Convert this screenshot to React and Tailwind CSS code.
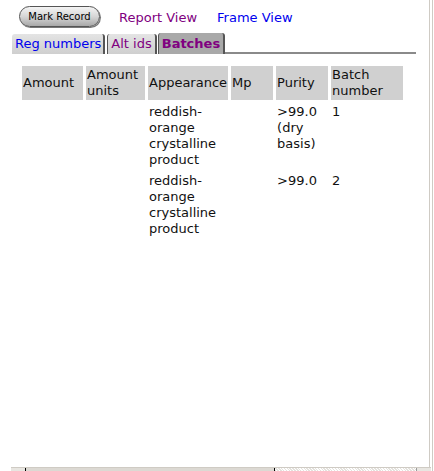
import React from 'react';

const rows = [
  { appearance: ['reddish-', 'orange', 'crystalline', 'product'], purity: ['>99.0', '(dry', 'basis)'], batch: '1' },
  { appearance: ['reddish-', 'orange', 'crystalline', 'product'], purity: ['>99.0'], batch: '2' },
];

const App = () => {
  return (
    <div className="relative h-[471px] w-[434px] overflow-hidden bg-white text-[13px] leading-[16px] text-[#111]" style={{ fontFamily: '"DejaVu Sans", Verdana, sans-serif' }}>
      {/* top links */}
      <div className="flex items-center pl-[19px] pt-[6px]">
        <button className="h-[21px] w-[81px] rounded-full border border-[#555] bg-gradient-to-b from-[#f4f4f4] via-[#d6d6d6] to-[#a8a8a8] text-[10px] leading-[19px] text-black shadow-[1px_1px_0_#777]">
          Mark Record
        </button>
        <span className="ml-[19px] mt-[3px] text-[#800080]">Report View</span>
        <span className="ml-[20px] mt-[3px] text-[#0000ee]">Frame View</span>
      </div>

      {/* tabs */}
      <div className="mt-[6px] flex items-end pl-[12px]">
        <div className="flex h-[20px] items-center rounded-t-[3px] border-r-2 border-[#555] bg-gradient-to-b from-[#e4e4e4] to-[#cfcfcf] pl-[3px] pr-[2px] text-[#0000ee]">
          Reg numbers
        </div>
        <div className="ml-[2px] flex h-[20px] items-center rounded-t-[3px] border-l border-r-2 border-[#555] bg-gradient-to-b from-[#e4e4e4] to-[#cfcfcf] px-[3px] text-[#800080]">
          Alt ids
        </div>
        <div className="ml-[1px] flex h-[21px] items-center rounded-t-[3px] border-l border-r-2 border-[#555] bg-[#a9a9a9] px-[3px] font-bold text-[#800080]">
          Batches
        </div>
        <div className="h-[2px] w-[191px] bg-[#8a8a8a]"></div>
      </div>

      {/* table */}
      <table className="ml-[19px] mt-[9px] border-separate border-spacing-[3px]">
        <thead>
          <tr className="text-left font-normal">
            <th className="w-[61px] bg-[#d0d0d0] px-[1px] py-[1px] align-middle font-normal">Amount</th>
            <th className="w-[59px] bg-[#d0d0d0] px-[1px] py-[1px] align-middle font-normal">Amount<br />units</th>
            <th className="w-[79px] bg-[#d0d0d0] px-[1px] py-[1px] align-middle font-normal">Appearance</th>
            <th className="w-[42px] bg-[#d0d0d0] px-[1px] py-[1px] align-middle font-normal">Mp</th>
            <th className="w-[52px] bg-[#d0d0d0] px-[1px] py-[1px] align-middle font-normal">Purity</th>
            <th className="w-[72px] bg-[#d0d0d0] px-[1px] py-[1px] align-middle font-normal">Batch<br />number</th>
          </tr>
        </thead>
        <tbody>
          {rows.map((r, i) => (
            <tr key={i} className="align-top">
              <td className="px-[1px] py-[1px]"></td>
              <td className="px-[1px] py-[1px]"></td>
              <td className="px-[1px] py-[1px]">
                {r.appearance.map((l, j) => <div key={j}>{l}</div>)}
              </td>
              <td className="px-[1px] py-[1px]"></td>
              <td className="px-[1px] py-[1px]">
                {r.purity.map((l, j) => <div key={j}>{l}</div>)}
              </td>
              <td className="px-[1px] py-[1px]">{r.batch}</td>
            </tr>
          ))}
        </tbody>
      </table>

      {/* right edge */}
      <div className="absolute right-[1px] top-0 h-full w-[4px] border-x border-[#cfcbc4] bg-white"></div>

      {/* bottom scrollbar */}
      <div className="absolute bottom-0 left-[11px] flex h-[4px] w-[420px] border-t border-[#cfcbc4]">
        <div className="w-[15px] border-r border-black bg-[#e8e6e1]"></div>
        <div className="w-[249px] border-r border-black bg-[#dcd9d3]"></div>
        <div className="flex-1 bg-[repeating-linear-gradient(45deg,#e4e2dd_0,#e4e2dd_1px,#ffffff_1px,#ffffff_2px)]"></div>
        <div className="w-[15px] border-l border-[#999] bg-[#e8e6e1]"></div>
      </div>
    </div>
  );
};

export default App;
